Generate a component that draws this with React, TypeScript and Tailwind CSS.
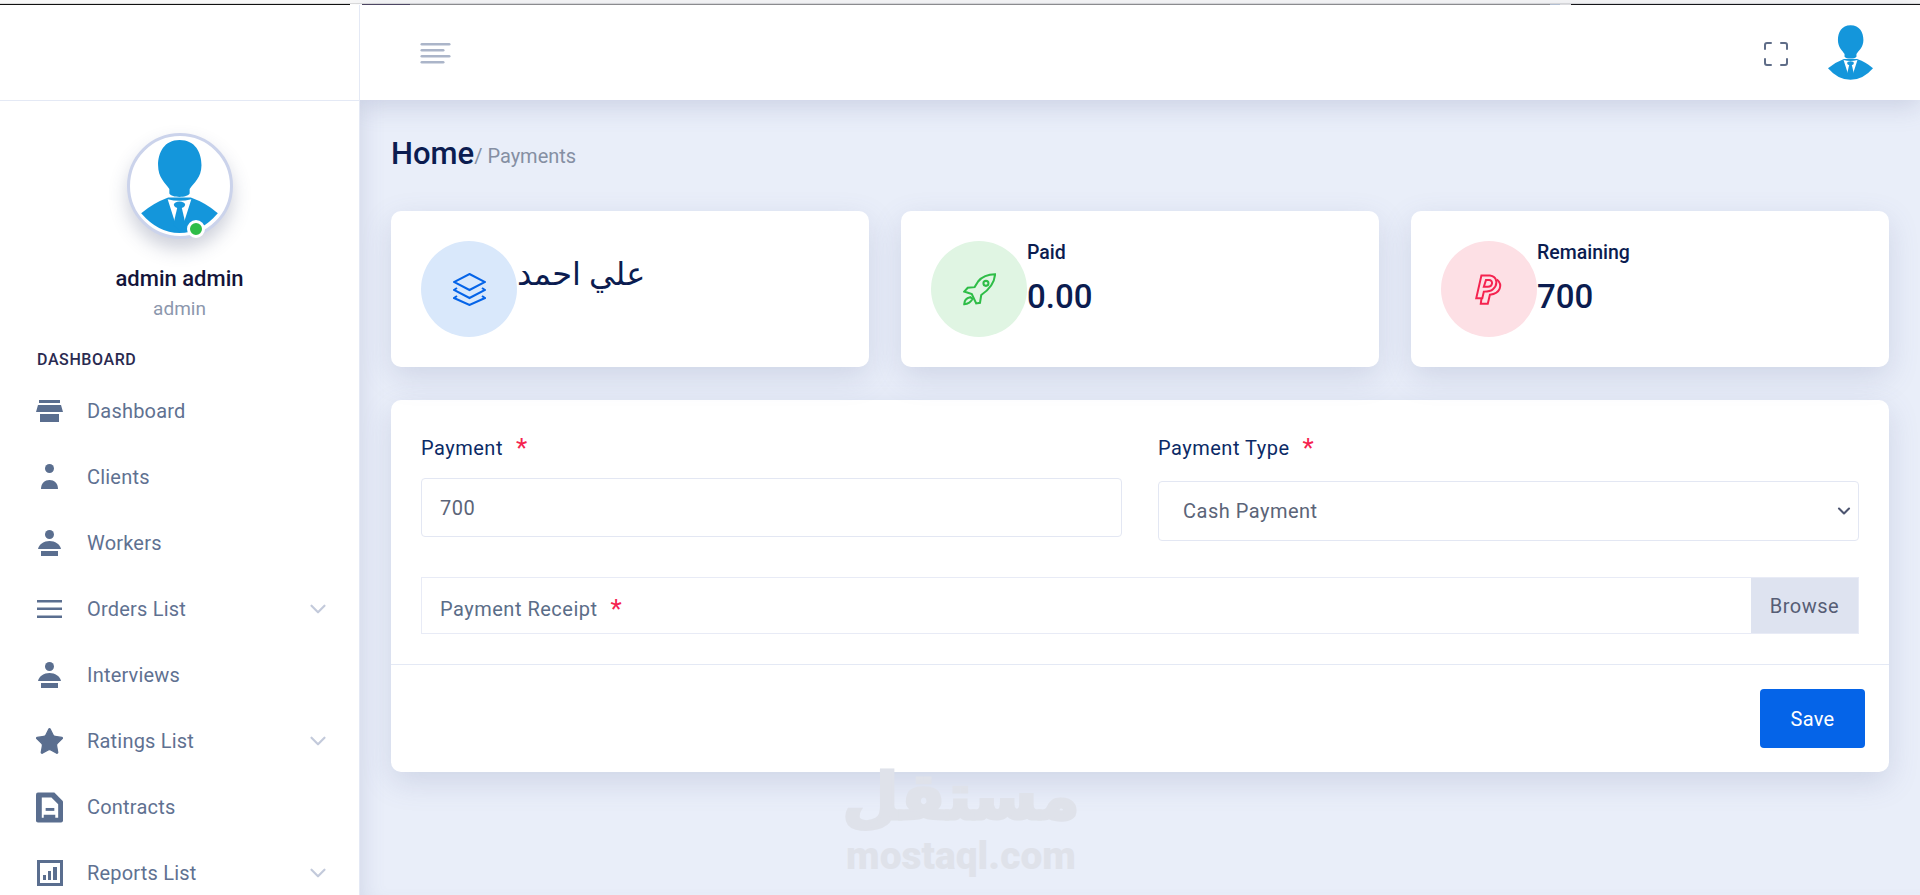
import React from 'react';
import { ChevronDown, Star } from 'lucide-react';

const Person = ({ className }: { className: string }) => (
  <svg viewBox="384 75 136 165" className={className}>
    <path fill="#1496db" d="M452 75C480 75 491 97 491 120C491 142 477 152 470 162L470 170C466 178 438 178 434 170L434 162C427 152 414 142 414 120C414 97 425 75 452 75Z" />
    <path fill="#1496db" d="M384 205Q405 187 432 177L472 177Q500 187 520 205Q490 240 452 240Q414 240 384 205Z" />
    <path fill="#fff" d="M431 180Q452 186 473 180L459 224L445 224Z" />
    <ellipse cx="452" cy="190" rx="10" ry="6" fill="#1496db" />
    <path fill="#1496db" d="M448 195L456 195L463 225L452 236L441 225Z" />
  </svg>
);

const DashboardIcon = () => (
  <svg viewBox="0 0 27 22" className="w-[27px] h-[22px]" fill="#5a6e8f">
    <rect x="3" y="0" width="21" height="3" />
    <path d="M2 5L25 5L27 12L0 12Z" />
    <rect x="4" y="14" width="19" height="8" />
  </svg>
);

const ClientIcon = () => (
  <svg viewBox="0 0 27 26" className="w-[27px] h-[26px]" fill="#5a6e8f">
    <circle cx="13.5" cy="4.5" r="4.5" />
    <path d="M5 25C5 19 9 16 13.5 16C18 16 22 19 22 25Z" />
  </svg>
);

const WorkerIcon = () => (
  <svg viewBox="0 0 27 26" className="w-[27px] h-[26px]" fill="#5a6e8f">
    <circle cx="13.5" cy="4.5" r="4.5" />
    <path d="M2 19C3 14 8 11 13.5 11C19 11 24 14 25 19Z" />
    <rect x="5" y="21" width="17" height="5" />
  </svg>
);

const OrdersIcon = () => (
  <svg viewBox="0 0 27 18" className="w-[27px] h-[18px]" fill="#5a6e8f">
    <rect x="1" y="0" width="25" height="2.5" />
    <rect x="1" y="7.5" width="25" height="2.5" />
    <rect x="1" y="15.5" width="25" height="2.5" />
  </svg>
);

const ContractIcon = () => (
  <svg viewBox="0 0 28 31" className="w-[28px] h-[31px]">
    <path fill="#5a6e8f" d="M2 0L19 0L28 9L28 29Q28 31 26 31L2 31Q0 31 0 29L0 2Q0 0 2 0Z" />
    <path fill="#fff" d="M6 5L16 5L23 12L23 26L20 26L20 23L8 23L8 26L6 26Z" />
    <rect x="10" y="16" width="9" height="3" fill="#5a6e8f" />
  </svg>
);

const ReportIcon = () => (
  <svg viewBox="0 0 26 26" className="w-[26px] h-[26px]" fill="#5a6e8f">
    <path d="M0 0H26V26H0ZM3 3V23H23V3Z" fillRule="evenodd" />
    <rect x="6" y="15" width="3" height="5" />
    <rect x="11" y="11" width="3" height="9" />
    <rect x="16" y="7" width="4" height="13" />
  </svg>
);

const LayersIcon = () => (
  <svg viewBox="0 0 33 33" className="w-[33px] h-[33px]" fill="none" stroke="#0564e8" strokeWidth="2">
    <path d="M16.5 1L32 9L16.5 17L1 9Z" />
    <path d="M4 15L1 17L16.5 25L32 17L29 15" />
    <path d="M4 23L1 25L16.5 32L32 25L29 23" />
  </svg>
);

const RocketIcon = () => (
  <svg viewBox="70 48 105 105" className="w-[33px] h-[33px]" fill="none" stroke="#2ebd47" strokeWidth="6.5">
    <path d="M172 52C150 52 132 58 118 75L107 93L85 95L74 107L98 115L112 145L124 143L128 118C150 103 170 85 172 52Z" />
    <circle cx="143" cy="81" r="8" />
    <path d="M93 125C80 128 74 138 74 147C85 147 97 140 100 130Z" />
  </svg>
);

const PaypalIcon = () => (
  <svg viewBox="76 50 92 102" className="w-[28px] h-[31px]" fill="none" stroke="#f5234f" strokeWidth="6.5">
    <path d="M97 55L125 55C150 58 152 85 135 100C128 107 115 108 105 108L100 130L80 130Z" />
    <path d="M112 70L105 92L118 92C135 92 137 70 122 70Z" />
    <path d="M148 68C168 85 160 115 125 118L118 148L95 148L97 132" />
  </svg>
);

const menuItems = [
  { name: 'Dashboard', icon: <DashboardIcon />, sub: false },
  { name: 'Clients', icon: <ClientIcon />, sub: false },
  { name: 'Workers', icon: <WorkerIcon />, sub: false },
  { name: 'Orders List', icon: <OrdersIcon />, sub: true },
  { name: 'Interviews', icon: <WorkerIcon />, sub: false },
  { name: 'Ratings List', icon: <Star className="w-[31px] h-[31px] shrink-0" fill="#5a6e8f" stroke="#5a6e8f" strokeWidth={1} />, sub: true },
  { name: 'Contracts', icon: <ContractIcon />, sub: false },
  { name: 'Reports List', icon: <ReportIcon />, sub: true },
];

const Sidebar = () => (
  <aside className="w-[360px] shrink-0 bg-white border-r border-[#e4e9f5] flex flex-col relative z-20">
    <div className="h-[96px] shrink-0 border-b border-[#e4e9f5]" />
    <div className="flex flex-col items-center pt-[32px]">
      <div className="relative w-[106px] h-[106px] rounded-full bg-white border-[3px] border-[#cbd3eb] shadow-[0_10px_18px_rgba(60,70,110,0.25)] flex items-end justify-center">
        <Person className="w-[77px] h-[93px] mb-[3px]" />
        <span className="absolute right-[25px] bottom-[-2px] w-[18px] h-[18px] rounded-full bg-[#2ebd47] border-[3px] border-white" />
      </div>
      <div className="mt-[26px] text-[22px] leading-[28px] font-medium text-[#14143a]">admin admin</div>
      <div className="mt-[2px] text-[19px] leading-[28px] text-[#8c97ad]">admin</div>
    </div>
    <div className="mt-[27px] pl-[37px] text-[16px] leading-[20px] font-medium tracking-[0.6px] text-[#2a2a50]">DASHBOARD</div>
    <nav className="mt-[8px] flex flex-col">
      {menuItems.map((item) => (
        <div key={item.name} className="h-[66px] flex items-center pl-[36px] pr-[28px]">
          <span className="w-[27px] flex justify-center">{item.icon}</span>
          <span className="ml-[24px] text-[20px] tracking-[0.2px] text-[#5f7191]">{item.name}</span>
          {item.sub && <ChevronDown className="ml-auto w-[26px] h-[26px] text-[#c3cadb]" />}
        </div>
      ))}
    </nav>
  </aside>
);

const TopBar = () => (
  <header className="h-[95px] shrink-0 bg-white flex items-center justify-between pl-[60px] pr-[47px] shadow-[0_6px_24px_rgba(90,100,150,0.22)] relative z-10">
    <svg viewBox="0 0 30 22" className="w-[31px] h-[22px] mt-[3px]" fill="#abb5c9">
      <rect x="0" y="0" width="30" height="2.6" rx="1.3" />
      <rect x="0" y="6" width="24" height="2.6" rx="1.3" />
      <rect x="0" y="12" width="30" height="2.6" rx="1.3" />
      <rect x="0" y="18" width="24" height="2.6" rx="1.3" />
    </svg>
    <div className="flex items-center gap-[40px]">
      <svg viewBox="0 0 24 24" className="w-[24px] h-[24px] mt-[2px]" fill="none" stroke="#5f6d88" strokeWidth="2" strokeLinecap="round" strokeLinejoin="round">
        <path d="M1 7V3a2 2 0 0 1 2-2h4M17 1h4a2 2 0 0 1 2 2v4M23 17v4a2 2 0 0 1-2 2h-4M7 23H3a2 2 0 0 1-2-2v-4" />
      </svg>
      <Person className="w-[45px] h-[55px]" />
    </div>
  </header>
);

const StatCard = ({ circle, icon, children }: { circle: string; icon: React.ReactNode; children: React.ReactNode }) => (
  <div className="flex-1 h-[156px] bg-white rounded-[10px] p-[30px] flex shadow-[0_10px_30px_rgba(90,100,150,0.18)]">
    <div className={`w-[96px] h-[96px] shrink-0 rounded-full flex items-center justify-center ${circle}`}>{icon}</div>
    <div>{children}</div>
  </div>
);

const Amount = ({ label, value }: { label: string; value: string }) => (
  <div className="text-[#0b1c50] pt-[1px]">
    <div className="text-[19.5px] leading-[22px] font-medium">{label}</div>
    <div className="mt-[11px] text-[33px] leading-[44px] font-medium">{value}</div>
  </div>
);

const Req = () => <span className="text-[#f5234f] ml-[13px] text-[26px] leading-none">*</span>;

const PaymentForm = () => (
  <div className="mt-[33px] bg-white rounded-[10px] shadow-[0_10px_30px_rgba(90,100,150,0.18)]">
    <div className="px-[30px] pt-[36px] pb-[30px] border-b border-[#e4e9f5]">
      <div className="grid grid-cols-2 gap-x-[36px]">
        <div>
          <div className="h-[24px] flex items-center text-[20px] tracking-[0.5px] text-[#0b2a66]">Payment<Req /></div>
          <div className="mt-[18px] h-[59px] border border-[#e3e7f3] rounded-[4px] flex items-center px-[18px] text-[20px] tracking-[0.5px] text-[#5b6478]">700</div>
        </div>
        <div>
          <div className="h-[24px] flex items-center text-[20px] tracking-[0.5px] text-[#0b2a66]">Payment Type<Req /></div>
          <div className="mt-[21px] h-[60px] border border-[#e3e7f3] rounded-[4px] flex items-center justify-between pl-[24px] pr-[4px] text-[20px] tracking-[0.5px] text-[#5b6478]">
            Cash Payment
            <ChevronDown className="w-[20px] h-[20px] text-[#4d5570]" strokeWidth={2.5} />
          </div>
        </div>
      </div>
      <div className="mt-[36px] h-[57px] border border-[#e8ebf6] flex items-center justify-between pl-[18px] text-[20px] tracking-[0.5px] text-[#5b6d88]">
        <span className="flex items-center pt-[6px]">Payment Receipt<Req /></span>
        <span className="w-[107px] h-full bg-[#dee3f0] flex items-center justify-center text-[#565d75]">Browse</span>
      </div>
    </div>
    <div className="flex justify-end pt-[24px] pb-[24px] pr-[24px]">
      <button className="w-[105px] h-[59px] rounded-[4px] bg-[#0564e8] text-white text-[20px] tracking-[0.3px]">Save</button>
    </div>
  </div>
);

export default function App() {
  return (
    <div className="h-[895px] overflow-hidden flex flex-col bg-[#e9eef9] relative" style={{ fontFamily: 'Roboto, "DejaVu Sans", sans-serif' }}>
      <div className="h-[5px] shrink-0 flex bg-white border-t-[3px] border-[#f8f8f8] pt-[1px] shadow-[inset_0_1px_0_#dcdcdc]">
        <div className="w-[350px] h-[1px] bg-[#111]" />
        <div className="w-[12px]" />
        <div className="w-[48px] h-[1px] bg-[#4d4560]" />
        <div className="w-[1140px] h-[1px] bg-[#8f8f8f]" />
        <div className="w-[10px] h-[1px] bg-[#b9c6d6]" />
        <div className="w-[11px] h-[1px] bg-[#e5e5e5]" />
        <div className="flex-1 h-[1px] bg-[#111]" />
      </div>
      <div className="flex flex-1 min-h-0">
        <Sidebar />
        <div className="flex-1 flex flex-col min-w-0 shadow-[inset_18px_0_24px_-18px_rgba(90,100,150,0.2)]">
          <TopBar />
          <main className="pl-[31px] pr-[31px] pt-[33px]">
            <div className="flex items-center text-[#0b1c50]">
              <span className="text-[31px] leading-[42px] font-medium">Home</span>
              <span className="text-[20px] mt-[3px] text-[#858fa3]">/ Payments</span>
            </div>
            <div className="mt-[36px] flex gap-[32px]">
              <StatCard circle="bg-[#d9e8fb]" icon={<LayersIcon />}>
                <div className="text-[32px] leading-[44px] text-[#0b1c50] mt-[11px]" dir="rtl">علي احمد</div>
              </StatCard>
              <StatCard circle="bg-[#e0f5e3]" icon={<RocketIcon />}>
                <Amount label="Paid" value="0.00" />
              </StatCard>
              <StatCard circle="bg-[#fde0e5]" icon={<PaypalIcon />}>
                <Amount label="Remaining" value="700" />
              </StatCard>
            </div>
            <PaymentForm />
          </main>
        </div>
      </div>
      <div className="absolute left-[845px] top-[758px] w-[232px] flex flex-col items-center pointer-events-none text-[#dfe2ea] font-black">
        <div className="text-[65px] leading-[78px] [-webkit-text-stroke:3px_#dfe2ea]" dir="rtl">مستقل</div>
        <div className="text-[39px] leading-[40px]">mostaql.com</div>
      </div>
    </div>
  );
}
